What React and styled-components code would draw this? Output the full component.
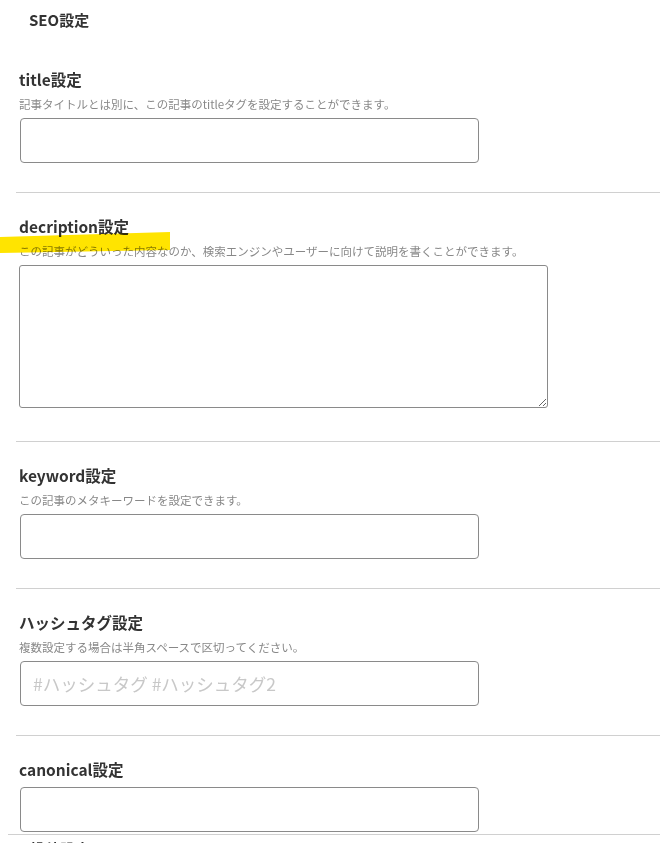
import React from "react";
import styled, { createGlobalStyle } from "styled-components";

const GlobalStyle = createGlobalStyle`
  html, body {
    margin: 0;
    padding: 0;
    background: #ffffff;
  }
  body {
    font-family: "Noto Sans CJK JP", "Noto Sans", sans-serif;
    color: #333333;
  }
`;

const sections = [
  {
    key: "title",
    label: "title設定",
    note: "記事タイトルとは別に、この記事のtitleタグを設定することができます。",
    field: "input",
  },
  {
    key: "description",
    label: "decription設定",
    note: "この記事がどういった内容なのか、検索エンジンやユーザーに向けて説明を書くことができます。",
    field: "textarea",
  },
  {
    key: "keyword",
    label: "keyword設定",
    note: "この記事のメタキーワードを設定できます。",
    field: "input",
  },
  {
    key: "hashtag",
    label: "ハッシュタグ設定",
    note: "複数設定する場合は半角スペースで区切ってください。",
    field: "input",
    placeholder: "#ハッシュタグ #ハッシュタグ2",
  },
];

const App = () => {
  return (
    <>
      <GlobalStyle />
      <Page>
        <Marker viewBox="0 0 170 22" preserveAspectRatio="none">
          <polygon points="0,5 170,0 170,18 0,21" fill="#ffe400" />
        </Marker>
        <PanelTitle>SEO設定</PanelTitle>
        <Sections>
          {sections.map((s, i) => (
            <Section key={s.key} first={i === 0}>
              <Label>{s.label}</Label>
              <Note>{s.note}</Note>
              {s.field === "textarea" ? (
                <TextArea />
              ) : (
                <TextInput placeholder={s.placeholder || ""} />
              )}
            </Section>
          ))}
          <Section last>
            <Label>canonical設定</Label>
            <TextInput gap={"1px"} />
          </Section>
        </Sections>
        <NextPanel>
          <NextTitle>投稿設定</NextTitle>
        </NextPanel>
      </Page>
    </>
  );
};

export default App;

const Page = styled.div`
  position: relative;
  width: 660px;
  height: 843px;
  overflow: hidden;
`;

const Marker = styled.svg`
  position: absolute;
  left: 0;
  top: 232px;
  width: 170px;
  height: 22px;
  mix-blend-mode: multiply;
  pointer-events: none;
  z-index: 2;
`;

const PanelTitle = styled.div`
  padding: 10px 29px 0;
  height: 20px;
  line-height: 20px;
  font-size: 15px;
  font-weight: 700;
  color: #333333;
`;

const Sections = styled.div`
  display: flex;
  flex-direction: column;
  margin-left: 16px;
`;

const Section = styled.div`
  display: flex;
  flex-direction: column;
  align-items: flex-start;
  padding: ${(p) => (p.first ? "39px" : "23px")} 0
    ${(p) => (p.last ? "2px" : "29px")} 3px;
  border-bottom: ${(p) => (p.last ? "none" : "1px solid #d0d0d0")};
`;

const Label = styled.div`
  height: 20px;
  line-height: 20px;
  font-size: 15.5px;
  font-weight: 700;
  color: #333333;
  margin-bottom: 7px;
`;

const Note = styled.div`
  height: 16px;
  line-height: 16px;
  font-size: 11.5px;
  color: #888888;
  margin-bottom: 6px;
  white-space: nowrap;
`;

const TextInput = styled.input`
  box-sizing: border-box;
  width: 459px;
  height: 45px;
  margin: ${(p) => p.gap || "0"} 0 0 1px;
  padding: 0 12px;
  border: 1px solid #8a8a8a;
  border-radius: 4px;
  background: #ffffff;
  font-family: "Noto Sans CJK JP", sans-serif;
  font-size: 17.5px;
  color: #333333;
  outline: none;
  &::placeholder {
    color: #c8c8c8;
  }
`;

const TextArea = styled.textarea`
  display: block;
  box-sizing: border-box;
  width: 529px;
  height: 143px;
  margin: 0 0 4px 0;
  padding: 6px 8px;
  border: 1px solid #8a8a8a;
  border-radius: 3px;
  background: #ffffff;
  font-family: "Noto Sans CJK JP", sans-serif;
  font-size: 13px;
  resize: both;
  outline: none;
`;

const NextPanel = styled.div`
  margin-left: 8px;
  border-top: 1px solid #d0d0d0;
  padding: 4px 0 0 22px;
`;

const NextTitle = styled.div`
  line-height: 20px;
  font-size: 15px;
  font-weight: 700;
  color: #333333;
`;
